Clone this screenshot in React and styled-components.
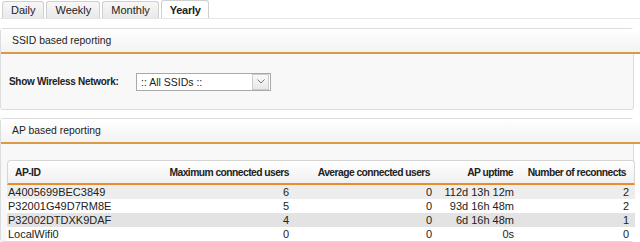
import React from 'react';
import styled, { createGlobalStyle } from 'styled-components';

const GlobalStyle = createGlobalStyle`
  html, body {
    margin: 0;
    padding: 0;
    background: #ffffff;
  }
  body {
    font-family: "Liberation Sans", Arial, sans-serif;
    font-size: 11px;
    color: #222;
    overflow: hidden;
  }
`;

const Page = styled.div`
  width: 640px;
  height: 242px;
  overflow: hidden;
`;

const TabBar = styled.div`
  display: flex;
  align-items: flex-end;
  gap: 2px;
  padding: 1px 0 0 2px;
  height: 17px;
  border-bottom: 1px solid #e6e6e6;
`;

const Tab = styled.div`
  height: ${(p) => (p.$active ? '17px' : '16px')};
  padding: 0 8px;
  display: flex;
  align-items: center;
  border: 1px solid #cfcfcf;
  border-bottom: none;
  border-radius: 3px 3px 0 0;
  background: ${(p) =>
    p.$active ? '#ffffff' : 'linear-gradient(#f7f7f7, #e9e9e9)'};
  font-size: 11px;
  letter-spacing: ${(p) => (p.$active ? '-0.3px' : '0')};
  font-weight: ${(p) => (p.$active ? 'bold' : 'normal')};
  color: #222;
`;

const Panel = styled.div`
  margin: ${(p) => p.$top}px 6px 0 0;
  border: 1px solid #dcdcdc;
  border-radius: 3px;
  background: #f8f8f8;
`;

const PanelHeader = styled.div`
  height: 23px;
  padding-left: 11px;
  display: flex;
  align-items: center;
  background: linear-gradient(#ffffff, #f3f3f3);
  border-bottom: 2px solid #d99a45;
  margin-right: -7px;
  font-size: 10.4px;
  color: #222;
`;

const FormRow = styled.div`
  height: 55px;
  display: flex;
  align-items: center;
  padding-left: 8px;
  padding-bottom: 1px;
  box-sizing: border-box;
`;

const Label = styled.label`
  font-weight: bold;
  width: 127px;
  font-size: 10px;
  letter-spacing: -0.3px;
  white-space: nowrap;
`;

const Select = styled.div`
  width: 129px;
  height: 16px;
  border: 1px solid #a9a9a9;
  background: #fff;
  display: flex;
  align-items: center;
  justify-content: space-between;
  padding-left: 4px;
  font-size: 10.5px;
  margin-top: 1px;
`;

const SelectArrow = styled.div`
  width: 15px;
  height: 14px;
  margin-right: 1px;
  border: 1px solid #cccccc;
  background: linear-gradient(#fafafa, #e8e8e8);
  display: flex;
  align-items: center;
  justify-content: center;
`;

const TableWrap = styled.div`
  padding: 16px 0 0 6px;
`;

const Table = styled.table`
  width: 628px;
  table-layout: fixed;
  border-collapse: separate;
  border-spacing: 0;
  font-size: 11px;
`;

const Th = styled.th`
  height: 22px;
  font-weight: bold;
  font-size: 10.3px;
  letter-spacing: -0.55px;
  text-align: ${(p) => p.$align || 'right'};
  padding: 0 ${(p) => p.$pr ?? 3}px 0 ${(p) => p.$pl ?? 3}px;
  background: linear-gradient(#ffffff, #f0f0f0);
  border-top: 1px solid #d6d6d6;
  border-bottom: 2px solid #e88d2e;
  color: #222;
  white-space: nowrap;
  &:first-child {
    border-left: 1px solid #d6d6d6;
    border-top-left-radius: 4px;
  }
  &:last-child {
    border-right: 1px solid #d6d6d6;
    border-top-right-radius: 4px;
  }
`;

const Tr = styled.tr`
  background: ${(p) => p.$bg};
`;

const Td = styled.td`
  height: 14px;
  padding: 0 ${(p) => p.$pr ?? 3}px 0 ${(p) => p.$pl ?? 3}px;
  text-align: ${(p) => p.$align || 'right'};
  white-space: nowrap;
  line-height: 14px;
  color: #222;
`;

const rows = [
  { id: 'A4005699BEC3849', max: 6, avg: 0, up: '112d 13h 12m', rec: 2 },
  { id: 'P32001G49D7RM8E', max: 5, avg: 0, up: '93d 16h 48m', rec: 2 },
  { id: 'P32002DTDXK9DAF', max: 4, avg: 0, up: '6d 16h 48m', rec: 1 },
  { id: 'LocalWifi0', max: 0, avg: 0, up: '0s', rec: 0 },
];

const rowBg = ['#ededed', '#ffffff', '#e3e3e3', '#ffffff'];

const colWidths = [153, 132, 143, 81, 119];

const tabs = [
  { name: 'Daily' },
  { name: 'Weekly' },
  { name: 'Monthly' },
  { name: 'Yearly', active: true },
];

export default function App() {
  return (
    <Page>
      <GlobalStyle />
      <TabBar>
        {tabs.map((t) => (
          <Tab key={t.name} $active={t.active}>
            {t.name}
          </Tab>
        ))}
      </TabBar>

      <Panel $top={9}>
        <PanelHeader>SSID based reporting</PanelHeader>
        <FormRow>
          <Label>Show Wireless Network:</Label>
          <Select>
            <span>:: All SSIDs ::</span>
            <SelectArrow>
              <svg width="8" height="5" viewBox="0 0 8 5">
                <path d="M0.5 0.5 L4 4 L7.5 0.5" fill="none" stroke="#777" strokeWidth="1" />
              </svg>
            </SelectArrow>
          </Select>
        </FormRow>
      </Panel>

      <Panel $top={8}>
        <PanelHeader>AP based reporting</PanelHeader>
        <TableWrap>
          <Table>
            <colgroup>
              {colWidths.map((w, i) => (
                <col key={i} style={{ width: w }} />
              ))}
            </colgroup>
            <thead>
              <tr>
                <Th $align="left" $pl={7}>AP-ID</Th>
                <Th>Maximum connected users</Th>
                <Th $pr={5}>Average connected users</Th>
                <Th $pr={3}>AP uptime</Th>
                <Th $pr={8}>Number of reconnects</Th>
              </tr>
            </thead>
            <tbody>
              {rows.map((r, i) => (
                <Tr key={r.id} $bg={rowBg[i]}>
                  <Td $align="left" $pl={1}>{r.id}</Td>
                  <Td>{r.max}</Td>
                  <Td>{r.avg}</Td>
                  <Td $pr={2}>{r.up}</Td>
                  <Td $pr={6}>{r.rec}</Td>
                </Tr>
              ))}
            </tbody>
          </Table>
        </TableWrap>
      </Panel>
    </Page>
  );
}
